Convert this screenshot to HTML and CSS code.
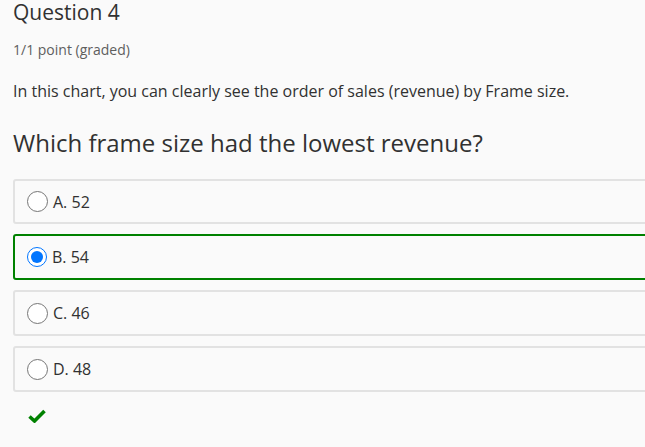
FILE: index.html
```html
<!DOCTYPE html>
<html>
<head>
<meta charset="utf-8">
<link rel="stylesheet" href="styles.css">
</head>
<body>
<div class="page">
  <h2 class="title">Question 4</h2>
  <div class="meta">1/1 point (graded)</div>
  <p class="intro">In this chart, you can clearly see the order of sales (revenue) by Frame size.</p>
  <h3 class="question">Which frame size had the lowest revenue?</h3>
  <div class="options">
    <label class="option"><span class="radio"></span><span class="label">A. 52</span></label>
    <label class="option correct"><span class="radio checked"></span><span class="label">B. 54</span></label>
    <label class="option"><span class="radio"></span><span class="label">C. 46</span></label>
    <label class="option"><span class="radio"></span><span class="label">D. 48</span></label>
  </div>
  <div class="status">
    <svg width="18" height="14" viewBox="0 0 18 14"><path d="M1.5 7.5 L6.5 12 L16.5 2" fill="none" stroke="#008100" stroke-width="3.6" stroke-linejoin="miter" stroke-linecap="butt"/></svg>
  </div>
</div>
</body>
</html>
```
FILE: styles.css
```css
html, body {
  margin: 0;
  padding: 0;
  background: #fafafa;
}
body {
  font-family: "Open Sans", "Noto Sans", sans-serif;
  color: #313131;
  overflow: hidden;
}
.page {
  padding: 0 0 0 13px;
  width: 660px;
}
.title {
  margin: 0;
  font-size: 21px;
  font-weight: 400;
  line-height: 24px;
  color: #313131;
}
.meta {
  margin-top: 16px;
  font-size: 14px;
  line-height: 20px;
  color: #5e5e5e;
}
.intro {
  margin: 20px 0 0;
  font-size: 16px;
  line-height: 22px;
  color: #313131;
}
.question {
  margin: 25px 0 0;
  font-size: 24px;
  font-weight: 400;
  line-height: 32px;
  color: #313131;
}
.options {
  margin-top: 20px;
  display: flex;
  flex-direction: column;
  gap: 10px;
}
.option {
  display: flex;
  align-items: center;
  height: 42px;
  border: 2px solid #e2e2e2;
  border-radius: 3px;
  background: #fafafa;
  padding-left: 12px;
}
.option:first-child {
  height: 41px;
}
.option.correct {
  border-color: #008100;
}
.radio {
  width: 19px;
  height: 19px;
  border: 1px solid #767676;
  border-radius: 50%;
  background: #fff;
  box-sizing: content-box;
  flex: none;
}
.radio.checked {
  border: 1.5px solid #0075ff;
  width: 18px;
  height: 18px;
  position: relative;
}
.radio.checked::after {
  content: "";
  position: absolute;
  left: 3px;
  top: 3px;
  width: 12px;
  height: 12px;
  border-radius: 50%;
  background: #0075ff;
}
.label {
  margin-left: 5px;
  font-size: 16px;
  color: #313131;
}
.status {
  margin-top: 17px;
  padding-left: 15px;
}
.status svg {
  display: block;
}
```
